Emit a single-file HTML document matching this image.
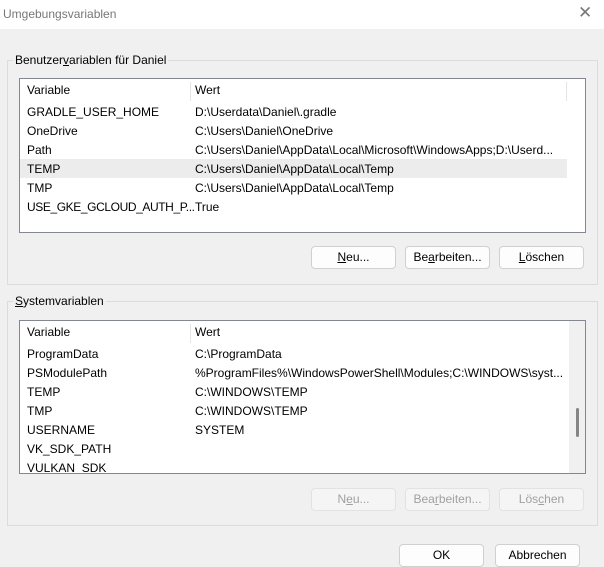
<!DOCTYPE html>
<html><head><style>
*{margin:0;padding:0;box-sizing:border-box}
body{width:604px;height:566px;background:#f0f0f0;font-family:"Liberation Sans",sans-serif;font-size:12px;color:#000;position:relative;overflow:hidden}
.a{position:absolute}
.title{left:0;top:0;width:604px;height:29px;background:#fff}
.gb{border:1px solid #dcdcdc}
.leg{background:#f0f0f0;padding:0 2px;white-space:nowrap}
.list{background:#fff;border:1px solid #828790}
.t{white-space:nowrap;line-height:21px;height:19px}
.btn{background:#fdfdfd;border:1px solid #d0d0d0;border-radius:4px;text-align:center;line-height:21px;height:23px;width:85px}
.dis{color:#a0a0a0;background:#f5f5f5;border-color:#e2e2e2}
u{text-decoration:underline}
</style></head><body>
<div class="a title"></div>
<div class="a" style="left:3px;top:7px;color:#777;font-size:12px">Umgebungsvariablen</div>
<div class="a" style="left:578px;top:3px;color:#777;font-size:17px">✕</div>

<div class="a gb" style="left:7px;top:60px;width:591px;height:225px"></div>
<div class="a leg" style="left:13px;top:53px">Benutzer<u>v</u>ariablen für Daniel</div>
<div class="a list" style="left:19px;top:78px;width:567px;height:155px">
 <div class="a" style="left:170px;top:3px;width:1px;height:19px;background:#e5e5e5"></div>
 <div class="a" style="left:546px;top:3px;width:1px;height:19px;background:#e5e5e5"></div>
 <div class="a t" style="left:7px;top:1px">Variable</div><div class="a t" style="left:175px;top:1px">Wert</div>
 <div class="a" style="left:0;top:80px;width:547px;height:19px;background:#ececec"></div>
 <div class="a t" style="left:7px;top:23px">GRADLE_USER_HOME</div><div class="a t" style="left:175px;top:23px">D:\Userdata\Daniel\.gradle</div>
 <div class="a t" style="left:7px;top:42px">OneDrive</div><div class="a t" style="left:175px;top:42px">C:\Users\Daniel\OneDrive</div>
 <div class="a t" style="left:7px;top:61px">Path</div><div class="a t" style="left:175px;top:61px;width:370px;overflow:hidden">C:\Users\Daniel\AppData\Local\Microsoft\WindowsApps;D:\Userd...</div>
 <div class="a t" style="left:7px;top:80px">TEMP</div><div class="a t" style="left:175px;top:80px">C:\Users\Daniel\AppData\Local\Temp</div>
 <div class="a t" style="left:7px;top:99px">TMP</div><div class="a t" style="left:175px;top:99px">C:\Users\Daniel\AppData\Local\Temp</div>
 <div class="a t" style="left:7px;top:118px;letter-spacing:-0.4px">USE_GKE_GCLOUD_AUTH_P...</div><div class="a t" style="left:175px;top:118px">True</div>
</div>
<div class="a btn" style="left:311px;top:246px"><u>N</u>eu...</div>
<div class="a btn" style="left:405px;top:246px">Be<u>a</u>rbeiten...</div>
<div class="a btn" style="left:499px;top:246px"><u>L</u>öschen</div>

<div class="a gb" style="left:7px;top:301px;width:591px;height:225px"></div>
<div class="a leg" style="left:13px;top:294px"><u>S</u>ystemvariablen</div>
<div class="a list" style="left:19px;top:320px;width:567px;height:154px;overflow:hidden">
 <div class="a" style="left:549px;top:0;width:17px;height:154px;background:#f0f0f0"></div>
 <div class="a" style="left:556px;top:87px;width:3px;height:29px;background:#858585;border-radius:2px"></div>
 <div class="a" style="left:170px;top:3px;width:1px;height:19px;background:#e5e5e5"></div>
 <div class="a t" style="left:7px;top:1px">Variable</div><div class="a t" style="left:175px;top:1px">Wert</div>
 <div class="a t" style="left:7px;top:23px">ProgramData</div><div class="a t" style="left:175px;top:23px">C:\ProgramData</div>
 <div class="a t" style="left:7px;top:42px">PSModulePath</div><div class="a t" style="left:175px;top:42px;width:370px;overflow:hidden">%ProgramFiles%\WindowsPowerShell\Modules;C:\WINDOWS\syst...</div>
 <div class="a t" style="left:7px;top:61px">TEMP</div><div class="a t" style="left:175px;top:61px">C:\WINDOWS\TEMP</div>
 <div class="a t" style="left:7px;top:80px">TMP</div><div class="a t" style="left:175px;top:80px">C:\WINDOWS\TEMP</div>
 <div class="a t" style="left:7px;top:99px">USERNAME</div><div class="a t" style="left:175px;top:99px">SYSTEM</div>
 <div class="a t" style="left:7px;top:118px">VK_SDK_PATH</div>
 <div class="a t" style="left:7px;top:137px">VULKAN_SDK</div>
</div>
<div class="a btn dis" style="left:311px;top:488px">N<u>e</u>u...</div>
<div class="a btn dis" style="left:405px;top:488px">Bea<u>r</u>beiten...</div>
<div class="a btn dis" style="left:499px;top:488px">Lös<u>c</u>hen</div>

<div class="a btn" style="left:399px;top:544px">OK</div>
<div class="a btn" style="left:495px;top:544px">Abbrechen</div>
</body></html>
